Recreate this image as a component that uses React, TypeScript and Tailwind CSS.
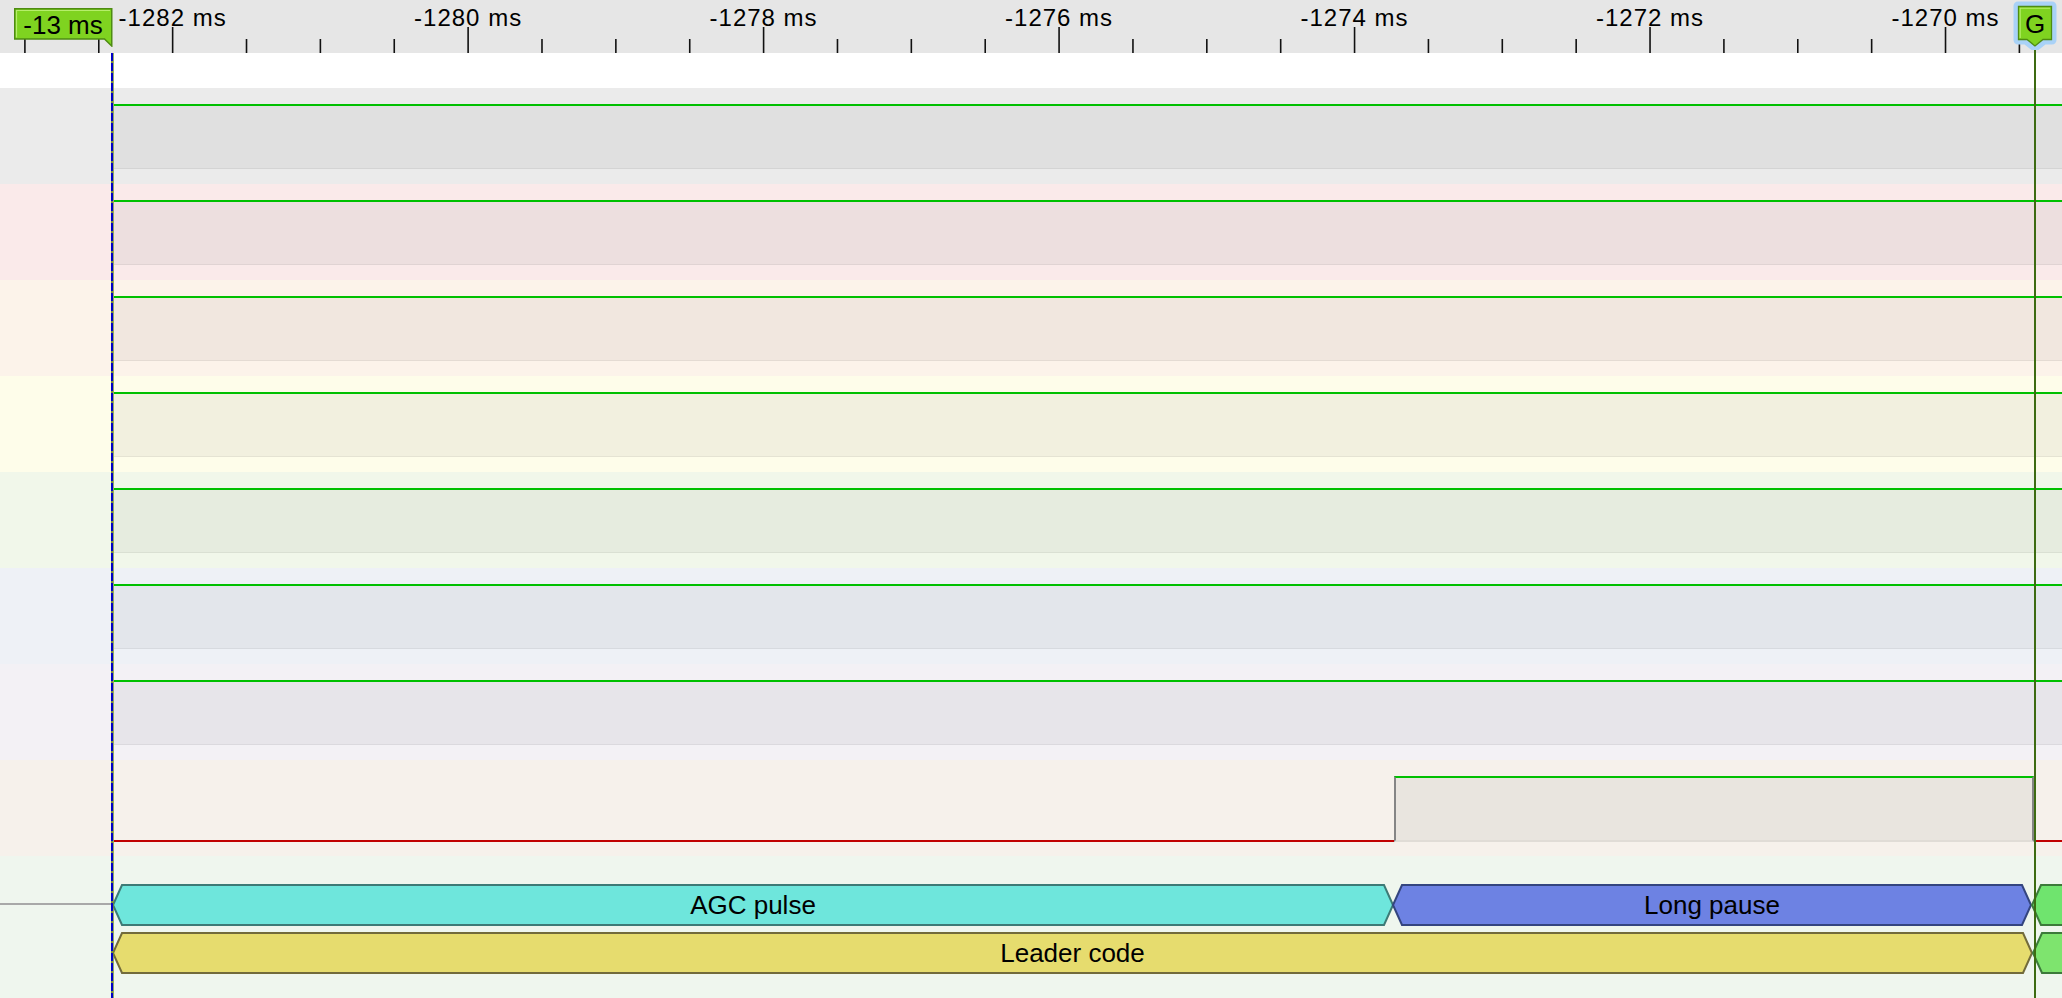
import React from "react";

// channel rows: row background + fill under the high level
const ROWS = [
  { bg: "bg-[#ebebeb]", fill: "bg-[#e0e0e0]" },
  { bg: "bg-[#faeaea]", fill: "bg-[#eddfdf]" },
  { bg: "bg-[#fcf3ea]", fill: "bg-[#f1e7df]" },
  { bg: "bg-[#fefdea]", fill: "bg-[#f2f0df]" },
  { bg: "bg-[#f1f7ea]", fill: "bg-[#e6ecdf]" },
  { bg: "bg-[#eef1f6]", fill: "bg-[#e3e6eb]" },
  { bg: "bg-[#f3f1f5]", fill: "bg-[#e7e5ea]" },
];

const TICK0 = 24.9;
const TICK_STEP = 73.87;

function Ruler() {
  const ticks: { x: number; major: boolean }[] = [];
  for (let k = 0; k < 30; k++) {
    const x = TICK0 + TICK_STEP * k;
    if (x > 2062) break;
    ticks.push({ x, major: (k - 2) % 4 === 0 });
  }
  const labels = ticks.filter((t) => t.major);

  return (
    <div className="relative h-[53px] shrink-0 bg-[#e6e6e6]">
      <svg className="absolute inset-0" width={2062} height={53}>
        {ticks.map((t, i) => (
          <line
            key={i}
            x1={t.x}
            x2={t.x}
            y1={t.major ? 27 : 39}
            y2={53}
            stroke="#111"
            strokeWidth={1.6}
          />
        ))}
      </svg>
      {labels.map((t, i) => (
        <span
          key={i}
          className="absolute top-0 -translate-x-1/2 text-[24px] leading-normal tracking-[1px] text-black whitespace-nowrap"
          style={{ left: t.x }}
        >
          -{1282 - i * 2} ms
        </span>
      ))}
    </div>
  );
}

function LogicRow({ bg, fill }: { bg: string; fill: string }) {
  return (
    <div className={`flex h-[96px] shrink-0 ${bg}`}>
      <div className="w-[114px] shrink-0" />
      <div className="flex-1 pt-[16px]">
        <div className={`h-[65px] border-t-2 border-t-[#00c000] border-b border-b-black/5 ${fill}`} />
      </div>
    </div>
  );
}

function StepRow() {
  return (
    <div className="flex h-[96px] shrink-0 bg-[#f6f1eb]">
      <div className="w-[114px] shrink-0" />
      <div className="w-[1280px] shrink-0 pt-[80px]">
        <div className="h-[2px] bg-[#c00000]" />
      </div>
      <div className="w-[640px] shrink-0 pt-[16px]">
        <div className="h-[66px] border-t-2 border-t-[#00c000] border-x-2 border-x-[#858585] border-b-2 border-b-[#e0dcd6] bg-[#e9e5df]" />
      </div>
      <div className="flex-1 pt-[80px]">
        <div className="h-[2px] bg-[#c00000]" />
      </div>
    </div>
  );
}

function Chevron({
  w,
  widthClass,
  fill,
  stroke,
  label,
}: {
  w: number;
  widthClass: string;
  fill: string;
  stroke: string;
  label?: string;
}) {
  const h = 42;
  const t = 9;
  const pts = `${1 + t},1 ${w - 1 - t},1 ${w - 1},${h / 2} ${w - 1 - t},${h - 1} ${1 + t},${h - 1} 1,${h / 2}`;
  return (
    <div className={`relative h-[42px] shrink-0 ${widthClass}`}>
      <svg className="absolute inset-0" width={w} height={h}>
        <polygon points={pts} fill={fill} stroke={stroke} strokeWidth={2} />
      </svg>
      {label && (
        <span className="relative flex h-full items-center justify-center text-[26px] text-black">
          {label}
        </span>
      )}
    </div>
  );
}

function DecoderRow() {
  return (
    <div className="flex h-[142px] shrink-0 bg-[#eff6ee]">
      <div className="w-[113px] shrink-0 pt-[47px]">
        <div className="h-[2px] bg-[#a8a8a8]" />
      </div>
      <div className="flex min-w-0 flex-1 flex-col gap-[6px] overflow-hidden pt-[28px]">
        <div className="flex -ml-px">
          <Chevron w={1282} widthClass="w-[1282px]" fill="#6ee6dc" stroke="#3d7a76" label="AGC pulse" />
          <Chevron w={640} widthClass="w-[640px] -ml-[2px]" fill="#6d82e3" stroke="#34457f" label="Long pause" />
          <Chevron w={60} widthClass="w-[60px] -ml-[1px]" fill="#6fe46e" stroke="#3c7a3a" />
        </div>
        <div className="flex -ml-px">
          <Chevron w={1921} widthClass="w-[1921px]" fill="#e6dc6e" stroke="#726b3b" label="Leader code" />
          <Chevron w={60} widthClass="w-[60px] -ml-[1px]" fill="#7ee46e" stroke="#3c7a3a" />
        </div>
      </div>
    </div>
  );
}

function TimeFlag() {
  return (
    <div className="absolute left-[14px] top-[8px] h-[39px] w-[99px]">
      <svg className="absolute inset-0" width={99} height={39}>
        <polygon points="0.75,0.75 97.75,0.75 97.75,38 90.5,31 0.75,31" fill="#7fd320" stroke="#4e8c12" strokeWidth={1.5} />
        <polyline points="2.5,29.5 2.5,2.5 96,2.5" fill="none" stroke="#b6ee6a" strokeWidth={1.2} />
      </svg>
      <span className="absolute left-0 top-0 flex h-[32px] w-[98px] items-center justify-center pt-[2px] text-[26px] text-black">
        -13 ms
      </span>
    </div>
  );
}

function TriggerFlag() {
  return (
    <div className="absolute left-[2013px] top-0 h-[50px] w-[44px]">
      <svg className="absolute inset-0" width={44} height={50}>
        <path
          d="M5,6 H39 V40 H31 L22,47 L13,40 H5 Z"
          fill="#a9d2f7"
          stroke="#a9d2f7"
          strokeWidth={9}
          strokeLinejoin="round"
        />
        <path d="M5.5,6.5 H38.5 V39.5 H30 L22,46 L14,39.5 H5.5 Z" fill="#7fd320" stroke="#4e8c12" strokeWidth={1.3} />
        <polyline points="7.2,38 7.2,8.2 37,8.2" fill="none" stroke="#b6ee6a" strokeWidth={1.1} />
      </svg>
      <span className="absolute left-[5px] top-[7px] flex h-[34px] w-[34px] items-center justify-center text-[26px] text-black">
        G
      </span>
    </div>
  );
}

export default function App() {
  return (
    <div className="relative flex h-[998px] w-[2062px] flex-col overflow-hidden bg-white font-['Liberation_Sans',Arial,sans-serif]">
      <Ruler />
      <div className="h-[35px] shrink-0 bg-white" />
      {ROWS.map((r, i) => (
        <LogicRow key={i} bg={r.bg} fill={r.fill} />
      ))}
      <StepRow />
      <DecoderRow />

      {/* cursor line for the -13 ms marker */}
      <div className="absolute bottom-0 left-[111px] top-[53px] w-[2px] bg-[repeating-linear-gradient(to_bottom,#0000c8_0px,#0000c8_8px,#7a8f3a_8px,#7a8f3a_10px)]" />
      <div className="absolute bottom-0 left-[113px] top-[53px] w-px bg-[#6b8a2a]/70" />
      {/* trigger line */}
      <div className="absolute bottom-0 left-[2034px] top-[44px] w-[2px] bg-[#3d6b12]" />

      <TimeFlag />
      <TriggerFlag />
    </div>
  );
}
